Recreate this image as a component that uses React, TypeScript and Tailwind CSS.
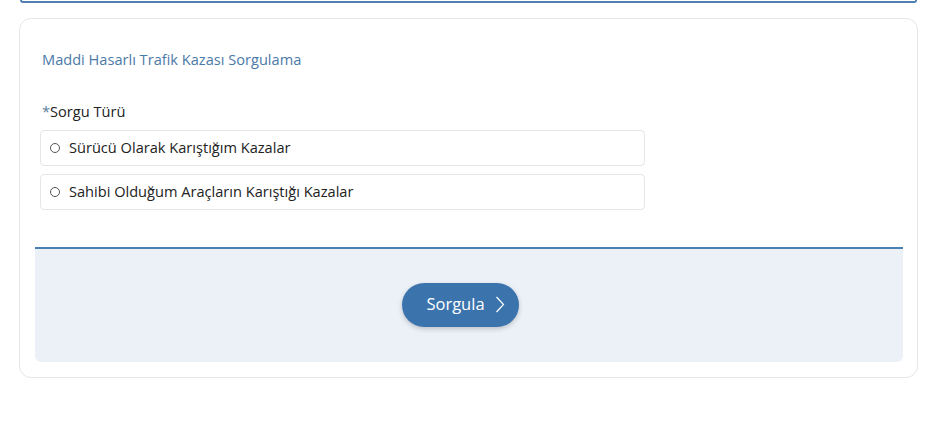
import React from "react";

const options = ["Sürücü Olarak Karıştığım Kazalar", "Sahibi Olduğum Araçların Karıştığı Kazalar"];

export default function App() {
  return (
    <div className="min-h-[436px] w-[934px] bg-white font-['Open_Sans',sans-serif] text-[#222]">
      <div className="ml-[20px] mr-[17px] h-[3px] rounded-b-[6px] border-x-2 border-b-2 border-[#4f80b0]" />

      <div className="ml-[19px] mr-[16px] mt-[15px] rounded-[12px] border border-[#e4e6e9] pl-[15px] pr-[14px] pb-[15px]">
        <div className="px-[7px] pt-[30px]">
          <h2 className="text-[14.6px] leading-[20px] text-[#4b7aa8]">Maddi Hasarlı Trafik Kazası Sorgulama</h2>

          <div className="mt-[32px] text-[14.6px] leading-[20px] text-[#222]">
            <span className="text-[#5a7d9c]">*</span>Sorgu Türü
          </div>

          <div className="mt-[9px] ml-[-2px] flex w-[605px] flex-col gap-[8px]">
            {options.map((label) => (
              <label
                key={label}
                className="flex h-[36px] items-center rounded-[4px] border border-[#e6e6e6] pl-[9px] text-[14.6px] text-[#222]"
              >
                <span className="mr-[9px] h-[10px] w-[10px] rounded-full border border-[#555]" />
                {label}
              </label>
            ))}
          </div>
        </div>

        <div className="mt-[37px] flex h-[115px] items-center justify-center rounded-b-[6px] border-t-2 border-[#4a7fb2] bg-[#ecf1f8] pb-[2px]">
          <button className="mr-[17px] flex h-[44px] w-[117px] items-center justify-center gap-[10px] rounded-full bg-[#3b74ad] pl-[10px] text-[16.5px] text-white shadow-[0_2px_5px_rgba(0,0,0,0.2)]">
            Sorgula
            <svg width="10" height="17" viewBox="0 0 10 17" fill="none">
              <path d="M1.5 1 L8.5 8.5 L1.5 16" stroke="white" strokeWidth="1.2" />
            </svg>
          </button>
        </div>
      </div>
    </div>
  );
}
